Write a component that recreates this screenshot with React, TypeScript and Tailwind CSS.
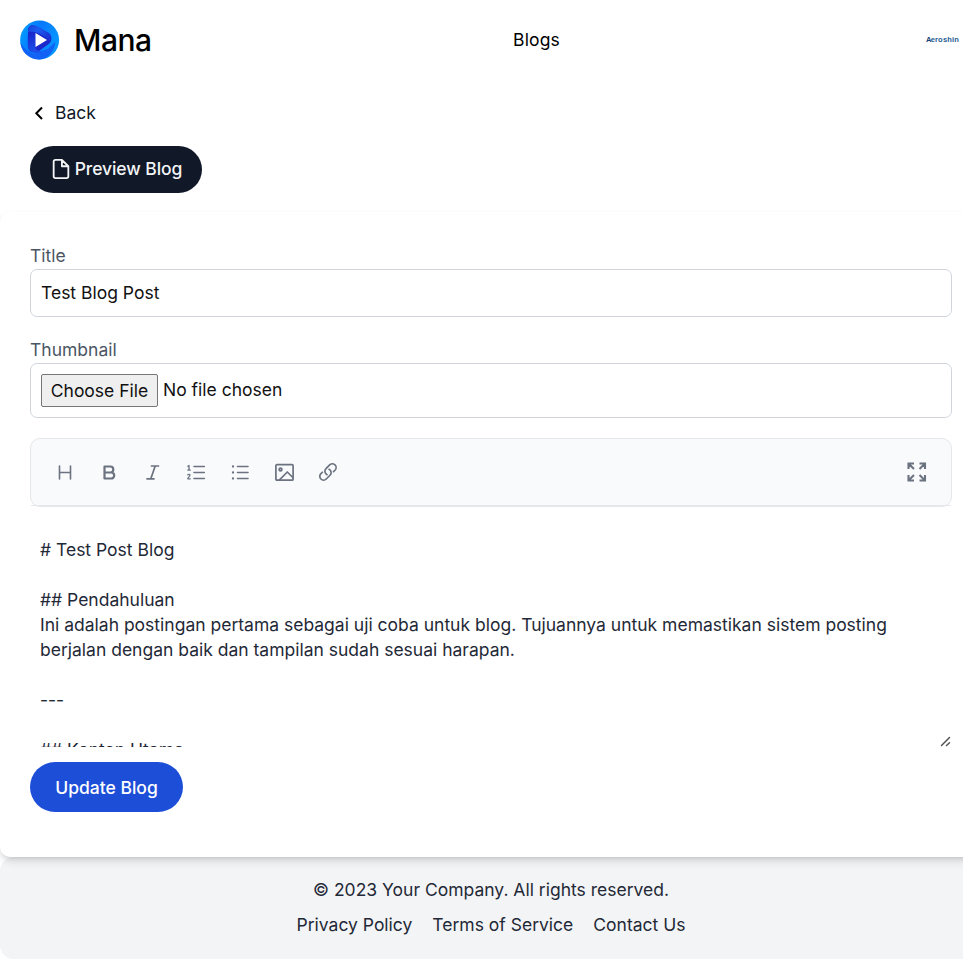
import React from 'react';

const stroke = {
  fill: 'none',
  stroke: 'currentColor',
  strokeLinecap: 'round' as const,
  strokeLinejoin: 'round' as const,
};

function Logo() {
  return (
    <svg className="size-10" viewBox="0 0 40 40">
      <defs>
        <linearGradient id="disc" x1="0" y1="0" x2="1" y2="0.4">
          <stop offset="0" stopColor="#00a6ff" />
          <stop offset="0.5" stopColor="#0878fb" />
          <stop offset="1" stopColor="#0796ff" />
        </linearGradient>
        <linearGradient id="top" x1="0" y1="0" x2="1" y2="0.6">
          <stop offset="0" stopColor="#1a3fd6" />
          <stop offset="0.45" stopColor="#1c5cf0" />
          <stop offset="1" stopColor="#1b33d2" />
        </linearGradient>
        <linearGradient id="side" x1="0" y1="0" x2="0.3" y2="1">
          <stop offset="0" stopColor="#1a22c8" />
          <stop offset="1" stopColor="#1c50ea" />
        </linearGradient>
      </defs>
      <circle cx="19.6" cy="20" r="19.5" fill="url(#disc)" />
      <path d="M0.500 22c4 8 9 10 13 12l14-5 8-7c-1 9-8 17.500-16 17.500C9 39.500 1 32 .5 22z" fill="#1262f5" />
      <path d="M8 15V10c0-4 4-6 8-4l12 6.500c4 2.500 5 9 0 12L19 31c-5 3-10 1-11-4z" fill="#1a28cc" />
      <path d="M8 12c0-5 4-8 8-6l11 6c4 2 5 6 3 10-2-4-6-6-11-8.500-4-2-8-2-11-1.500z" fill="url(#top)" />
      <path d="M7.800 16c.5-4 4.500-5 7.500-3v14c0 3 3 4.500 6 4-3 2.800-7 2.500-10 .5-2-1.500-3.500-4-3.500-7z" fill="url(#side)" />
      <path d="M15.500 13v14L27 20z" fill="#fff" />
    </svg>
  );
}

function Header() {
  return (
    <header className="flex h-20 items-center justify-between pl-5 pr-[22px]">
      <div className="flex w-[136px] shrink-0 items-center gap-3.5">
        <Logo />
        <span className="text-[30px] font-medium leading-10 tracking-[-0.5px] text-black">Mana</span>
      </div>
      <a className="mb-0.5 mr-[9px] tracking-[0.15px] text-black">Blogs</a>
      <span className="w-[34px] whitespace-nowrap font-['Liberation_Sans',sans-serif] text-[7.5px] font-bold leading-none tracking-[0.2px] text-[#245b91]">
        <span className="tracking-[-0.8px] text-[#173f78]">A</span>eroshin
      </span>
    </header>
  );
}

function Toolbar() {
  return (
    <div className="px-px">
      <div className="-mx-px flex h-[69px] items-center justify-between rounded-[10px] border border-[#e5e7eb] bg-[#f9fafb] pl-6 pr-6 text-[#6b7280]">
        <div className="flex items-center gap-6">
          <svg className="size-5" viewBox="0 0 20 20" {...stroke} strokeWidth="1.6">
            <path d="M4.500 3v13M15.500 3v13M4.500 9.500h11" />
          </svg>
          <svg className="size-5" viewBox="0 0 20 20" {...stroke} strokeWidth="2.2">
            <path d="M5.500 3.500h5.800a3 3 0 0 1 0 6H5.500zM5.500 9.500h6.700a3 3 0 0 1 0 6H5.500z" />
          </svg>
          <svg className="size-5" viewBox="0 0 20 20" {...stroke} strokeWidth="1.7">
            <path d="M8.500 3h7M4 15.800h7M12.200 3l-4.400 12.800" />
          </svg>
          <svg className="size-5" viewBox="0 0 20 20" {...stroke} strokeWidth="1.6">
            <path d="M7 3.500h10.300M7 9.500h10.300M7 15.500h10.300" />
            <path strokeWidth="1.3" d="M.8 3.200 2 2.500v4.600M.8 7.100h2.500M.8 11.800c1-.9 2.400-.4 2.100.7-.2 1.100-2.100 1.900-2.100 3.300h2.500" />
          </svg>
          <svg className="size-5" viewBox="0 0 20 20" {...stroke} strokeWidth="1.6">
            <path d="M6.500 3.500h10.500M6.500 9.500h10.500M6.500 15.500h10.500" />
            <path strokeWidth="2.3" d="M2 3.500h.01M2 9.500h.01M2 15.500h.01" />
          </svg>
          <svg className="size-5" viewBox="0 0 20 20" {...stroke} strokeWidth="1.7">
            <rect x=".9" y="1.700" width="17.200" height="15.500" rx="1" />
            <circle cx="5.500" cy="6.500" r="1.400" fill="currentColor" fillOpacity="0.4" />
            <path d="M4.500 16.800l7.800-7.800 5.500 5.500" />
          </svg>
          <svg className="size-5" viewBox="0 0 24 24" {...stroke} strokeWidth="2">
            <path transform="translate(-1.2 -1.2)" d="M13.200 8.700a4.500 4.500 0 0 1 1.200 7.200l-4.500 4.500a4.500 4.500 0 0 1-6.400-6.400l1.800-1.700m13.300-.7 1.800-1.700A4.500 4.500 0 0 0 14 3.500L9.600 8a4.500 4.500 0 0 0 1.200 7.200" />
          </svg>
        </div>
        <svg className="mb-0.5 size-5" viewBox="0 0 20 20" {...stroke} strokeWidth="2.1" strokeLinecap="butt" strokeLinejoin="miter">
          <path d="M12.500 1.500h5.500V7M18 1.500 12.500 7M1.500 7V1.500H7M1.500 1.500 7 7M7 18.500H1.500V13M1.500 18.500 7 13M18 13v5.500H12.500M12.500 13l5.500 5.500" />
        </svg>
      </div>
      <div className="-mt-0.5 h-px bg-[#e5e7eb]" />
    </div>
  );
}

const lines = [
  '# Test Post Blog',
  '',
  '## Pendahuluan',
  'Ini adalah postingan pertama sebagai uji coba untuk blog. Tujuannya untuk memastikan sistem posting',
  'berjalan dengan baik dan tampilan sudah sesuai harapan.',
  '',
  '---',
  '',
  '## Konten Utama',
];

function Editor() {
  return (
    <div className="relative h-[241px] overflow-hidden px-2.5 pt-[31px] text-[#1f2937]">
      {lines.map((line, i) => (
        <p key={i} className="h-[25px] whitespace-nowrap">{line}</p>
      ))}
      <svg className="absolute bottom-0 right-0 size-3 text-neutral-600" viewBox="0 0 12 12" {...stroke} strokeWidth="1.5">
        <path d="M1.500 10.500 9.500 2.500M6.500 10.500 9.500 7.800" />
      </svg>
    </div>
  );
}

export default function App() {
  return (
    <div className="h-[959px] w-full overflow-hidden bg-white font-['Inter',sans-serif] text-[17.5px] leading-[25px]">
      <div className="w-[982px]">
        <Header />
        <div className="h-[132px] px-[30px] pt-5">
          <a className="flex h-[25px] items-center gap-[7px] text-[#111827]">
            <svg className="size-[18px] text-black" viewBox="0 0 18 18" {...stroke} strokeWidth="2" strokeLinecap="butt" strokeLinejoin="miter">
              <path d="M12 3.500 6.300 9.300 12 15" />
            </svg>
            Back
          </a>
          <button className="mt-[21px] flex h-[47px] w-[172px] items-center justify-center gap-[3px] rounded-full bg-[#111827] font-medium tracking-[-0.08px] text-[#f3f4f6]">
            <svg className="mb-px size-[22px] shrink-0" viewBox="0 0 24 24" {...stroke} strokeWidth="2">
              <path d="M13 2H6a2 2 0 0 0-2 2v16a2 2 0 0 0 2 2h12a2 2 0 0 0 2-2V9zM13 2v7h7" />
            </svg>
            <span className="mb-0.5">Preview Blog</span>
          </button>
        </div>

        <main className="relative h-[645px] rounded-[10px] bg-white px-[30px] pt-[31px] shadow-[0_5px_8px_-1px_rgba(0,0,0,0.13),0_2px_5px_-2px_rgba(0,0,0,0.13)]">
          <div className="w-[922px]">
            <label className="mb-px block text-[#4b5563]">Title</label>
            <div className="flex h-12 items-center rounded-[7px] border border-[#d1d5db] px-2.5 pb-0.5 text-[#111111]">Test Blog Post</div>
            <label className="mb-px mt-5 block text-[#4b5563]">Thumbnail</label>
            <div className="flex h-[55px] items-center gap-[5px] rounded-[7px] border border-[#d1d5db] px-2.5 text-[#111111]">
              <span className="flex h-[33px] w-[117px] items-center justify-center rounded-[2px] border border-[#767676] bg-[#efefef]">Choose File</span>
              <span className="mb-0.5">No file chosen</span>
            </div>
            <div className="mt-5">
              <Toolbar />
              <Editor />
            </div>
            <button className="mt-[15px] h-[50px] w-[153px] rounded-full bg-[#1d4ed8] font-medium text-white">Update Blog</button>
          </div>
        </main>

        <footer className="h-[102px] rounded-[14px] bg-[#f3f4f6] pt-5 text-center text-[#1f2937]">
          <p>© 2023 Your Company. All rights reserved.</p>
          <nav className="mt-2.5 flex justify-center gap-5">
            <a>Privacy Policy</a>
            <a>Terms of Service</a>
            <a>Contact Us</a>
          </nav>
        </footer>
      </div>
    </div>
  );
}
